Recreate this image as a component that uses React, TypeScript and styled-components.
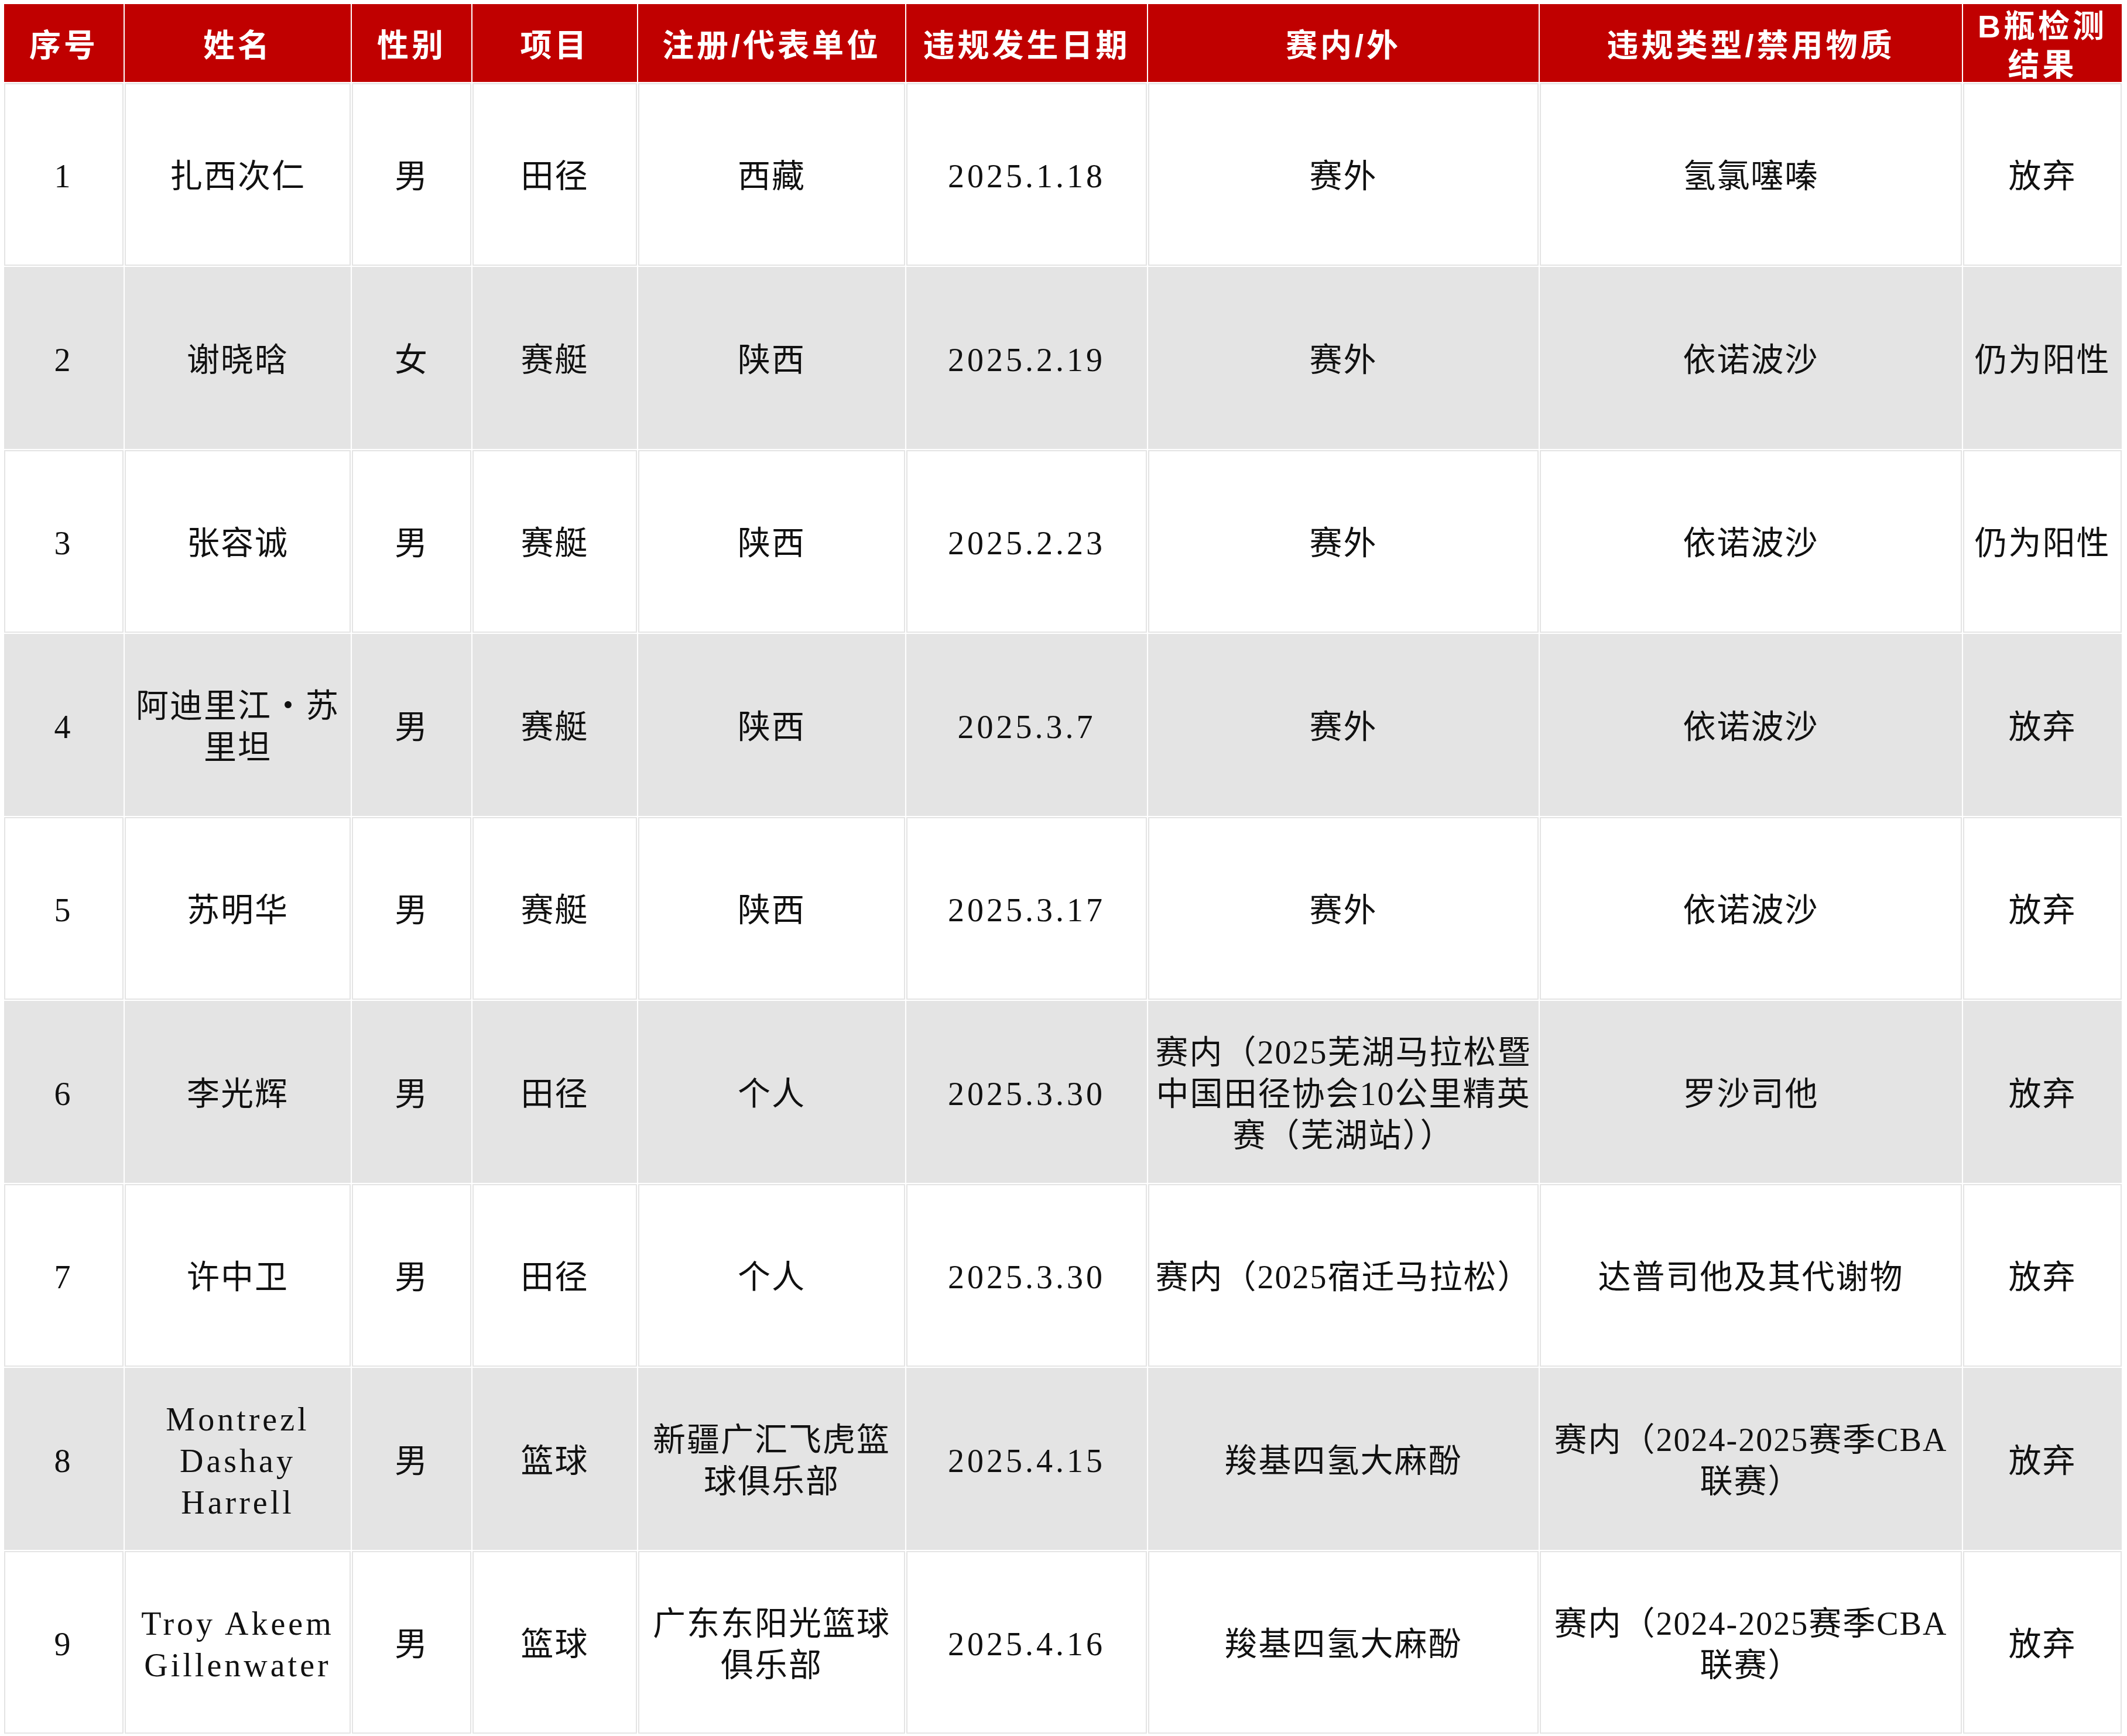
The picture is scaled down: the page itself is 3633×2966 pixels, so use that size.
import React from "react";
import styled, { createGlobalStyle } from "styled-components";

const GlobalStyle = createGlobalStyle`
  html, body {
    margin: 0;
    padding: 0;
    background: #ffffff;
  }
  body {
    font-family: "Liberation Serif", "Noto Sans CJK SC", serif;
  }
`;

const Page = styled.div`
  padding: 7px 0 0 7px;
`;

const Table = styled.div`
  display: grid;
  grid-template-columns: 204px 386px 204px 281px 456px 411px 667px 721px 271px;
  grid-template-rows: 133px repeat(9, 311.5px);
  gap: 2px;
  background: #ffffff;
`;

const HeadCell = styled.div`
  background: #c00000;
  color: #ffffff;
  display: flex;
  align-items: center;
  justify-content: center;
  text-align: center;
  padding-top: 8px;
  box-sizing: border-box;
  font-family: "Liberation Sans", "Noto Sans CJK SC", sans-serif;
  font-weight: 700;
  font-size: 54px;
  letter-spacing: 5px;
  line-height: 66px;
  white-space: pre;
  overflow: hidden;
`;

const Cell = styled.div<{ $shaded: boolean; $wide?: boolean }>`
  background: ${(p) => (p.$shaded ? "#e4e4e4" : "#ffffff")};
  border: 2px solid #e4e4e4;
  box-sizing: border-box;
  padding-top: 8px;
  color: #111111;
  display: flex;
  align-items: center;
  justify-content: center;
  text-align: center;
  font-family: "Liberation Serif", "Noto Sans CJK SC", serif;
  font-size: 56px;
  letter-spacing: ${(p) => (p.$wide ? "5px" : "2px")};
  line-height: 71px;
  white-space: pre;
`;

interface IRow {
  no: string;
  name: string;
  sex: string;
  sport: string;
  unit: string;
  date: string;
  scope: string;
  substance: string;
  result: string;
}

const headers = [
  "序号",
  "姓名",
  "性别",
  "项目",
  "注册/代表单位",
  "违规发生日期",
  "赛内/外",
  "违规类型/禁用物质",
  "B瓶检测\n结果",
];

const rows: IRow[] = [
  { no: "1", name: "扎西次仁", sex: "男", sport: "田径", unit: "西藏", date: "2025.1.18", scope: "赛外", substance: "氢氯噻嗪", result: "放弃" },
  { no: "2", name: "谢晓晗", sex: "女", sport: "赛艇", unit: "陕西", date: "2025.2.19", scope: "赛外", substance: "依诺波沙", result: "仍为阳性" },
  { no: "3", name: "张容诚", sex: "男", sport: "赛艇", unit: "陕西", date: "2025.2.23", scope: "赛外", substance: "依诺波沙", result: "仍为阳性" },
  { no: "4", name: "阿迪里江・苏\n里坦", sex: "男", sport: "赛艇", unit: "陕西", date: "2025.3.7", scope: "赛外", substance: "依诺波沙", result: "放弃" },
  { no: "5", name: "苏明华", sex: "男", sport: "赛艇", unit: "陕西", date: "2025.3.17", scope: "赛外", substance: "依诺波沙", result: "放弃" },
  {
    no: "6",
    name: "李光辉",
    sex: "男",
    sport: "田径",
    unit: "个人",
    date: "2025.3.30",
    scope: "赛内（2025芜湖马拉松暨\n中国田径协会10公里精英\n赛（芜湖站））",
    substance: "罗沙司他",
    result: "放弃",
  },
  { no: "7", name: "许中卫", sex: "男", sport: "田径", unit: "个人", date: "2025.3.30", scope: "赛内（2025宿迁马拉松）", substance: "达普司他及其代谢物", result: "放弃" },
  {
    no: "8",
    name: "Montrezl\nDashay\nHarrell",
    sex: "男",
    sport: "篮球",
    unit: "新疆广汇飞虎篮\n球俱乐部",
    date: "2025.4.15",
    scope: "羧基四氢大麻酚",
    substance: "赛内（2024-2025赛季CBA\n联赛）",
    result: "放弃",
  },
  {
    no: "9",
    name: "Troy Akeem\nGillenwater",
    sex: "男",
    sport: "篮球",
    unit: "广东东阳光篮球\n俱乐部",
    date: "2025.4.16",
    scope: "羧基四氢大麻酚",
    substance: "赛内（2024-2025赛季CBA\n联赛）",
    result: "放弃",
  },
];

const isLatin = (s: string) => /^[A-Za-z0-9.\s]+$/.test(s);

const App = () => {
  return (
    <>
      <GlobalStyle />
      <Page>
        <Table>
          {headers.map((h) => (
            <HeadCell key={h}>{h}</HeadCell>
          ))}
          {rows.map((r, i) => {
            const shaded = i % 2 === 1;
            const values = [r.no, r.name, r.sex, r.sport, r.unit, r.date, r.scope, r.substance, r.result];
            return values.map((v, j) => (
              <Cell key={`${r.no}-${j}`} $shaded={shaded} $wide={isLatin(v)}>
                {v}
              </Cell>
            ));
          })}
        </Table>
      </Page>
    </>
  );
};

export default App;
